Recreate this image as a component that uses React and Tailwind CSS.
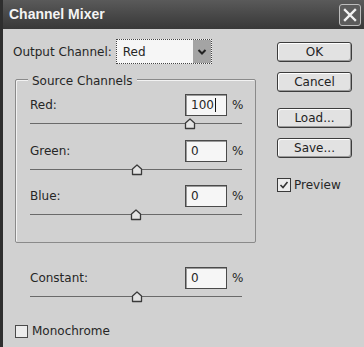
import React from 'react';

const Thumb = ({ x }) => (
  <svg
    width="12"
    height="12"
    viewBox="0 0 12 12"
    className="absolute top-[2px]"
    style={{ left: x - 6 }}
  >
    <path d="M6 1 L10.5 5 L10.5 10.5 L1.5 10.5 L1.5 5 Z" fill="#e4e4e4" stroke="#3a3a3a" strokeWidth="1.3" strokeLinejoin="round" />
  </svg>
);

const Slider = ({ thumb }) => (
  <div className="relative h-[16px] w-[212px]">
    <div className="absolute left-0 right-0 top-[7px] h-[2px] border-t border-[#6a6a6a] border-b-white" />
    <Thumb x={thumb} />
  </div>
);

const Field = ({ label, value, caret }) => (
  <div className="flex h-[22px] items-center">
    <span className="w-[155px]">{label}</span>
    <div className="flex h-[22px] w-[42px] items-center border border-[#4a4a4a] bg-[#f6f6f6] pl-[5px] shadow-[inset_1px_1px_0_#9a9a9a]">
      {value}
      {caret && <span className="ml-[1px] h-[14px] w-[1px] bg-[#111]" />}
    </div>
    <span className="ml-[5px]">%</span>
  </div>
);

const Button = ({ children }) => (
  <button className="flex h-[20px] w-[75px] items-center justify-center rounded-[3px] border border-[#3c3c3c] bg-[#e2e2e2] text-[#222] shadow-[inset_-1px_-1px_0_#9a9a9a,inset_1px_1px_0_#ffffff]">
    {children}
  </button>
);

export default function App() {
  return (
    <div className="h-[347px] w-[364px] overflow-hidden border-l-[3px] border-[#2e2e2e] bg-[#d1d1d1] font-['DejaVu_Sans',sans-serif] text-[12px] text-[#262626]">
      {/* Title bar */}
      <div className="flex h-[29px] items-center justify-between bg-gradient-to-b from-[#5a5a5a] to-[#383838] pl-[6px] pr-[3px]">
        <span className="font-['Liberation_Sans',sans-serif] text-[14px] font-bold text-[#f4f4f4]">Channel Mixer</span>
        <div className="flex h-[22px] w-[22px] items-center justify-center rounded-[3px] border border-[#bdbdbd] bg-[#5c5c5c]">
          <svg width="14" height="14" viewBox="0 0 14 14">
            <path d="M2 2 L12 12 M12 2 L2 12" stroke="#f2f2f2" strokeWidth="2.4" strokeLinecap="square" />
          </svg>
        </div>
      </div>

      <div className="flex">
        {/* Left column */}
        <div className="w-[260px] pl-[10px]">
          <div className="mt-[10px] flex h-[25px] items-center">
            <span>Output Channel:</span>
            <div className="ml-[4px] flex h-[25px] w-[96px] items-center border border-dotted border-[#444] bg-[#f6f6f6] pl-[6px]">
              <span className="flex-1">Red</span>
              <div className="flex h-full w-[18px] items-center justify-center bg-[#a4a4a4]">
                <svg width="10" height="8" viewBox="0 0 10 8">
                  <path d="M1.5 2 L5 5.5 L8.5 2" fill="none" stroke="#222" strokeWidth="2" />
                </svg>
              </div>
            </div>
          </div>

          {/* Source Channels group */}
          <div className="relative ml-[2px] mt-[15px] h-[164px] w-[241px] rounded-[2px] border border-[#8a8a8a] pl-[14px] pt-[14px] shadow-[inset_1px_1px_0_#f2f2f2]">
            <span className="absolute -top-[8px] left-[12px] bg-[#d1d1d1] px-[4px]">Source Channels</span>
            <Field label="Red:" value="100" caret />
            <Slider thumb={160} />
            <div className="mt-[8px]">
              <Field label="Green:" value="0" />
              <Slider thumb={107} />
            </div>
            <div className="mt-[7px]">
              <Field label="Blue:" value="0" />
              <Slider thumb={106} />
            </div>
          </div>

          <div className="mt-[24px] pl-[17px]">
            <Field label="Constant:" value="0" />
            <Slider thumb={107} />
          </div>

          <div className="ml-[2px] mt-[17px] flex items-center">
            <span className="h-[13px] w-[13px] border border-[#4a4a4a] bg-[#ececec]" />
            <span className="ml-[4px]">Monochrome</span>
          </div>
        </div>

        {/* Right column */}
        <div className="ml-[14px] flex flex-col">
          <div className="mt-[13px]">
            <Button>OK</Button>
          </div>
          <div className="mt-[10px]">
            <Button>Cancel</Button>
          </div>
          <div className="mt-[16px]">
            <Button>Load...</Button>
          </div>
          <div className="mt-[10px]">
            <Button>Save...</Button>
          </div>
          <div className="mt-[18px] flex items-center">
            <span className="flex h-[14px] w-[14px] items-center justify-center border border-[#3a3a3a] bg-[#ececec]">
              <svg width="10" height="10" viewBox="0 0 10 10">
                <path d="M1.5 5 L4 7.5 L8.5 2" fill="none" stroke="#333" strokeWidth="1.6" />
              </svg>
            </span>
            <span className="ml-[3px]">Preview</span>
          </div>
        </div>
      </div>
    </div>
  );
}
